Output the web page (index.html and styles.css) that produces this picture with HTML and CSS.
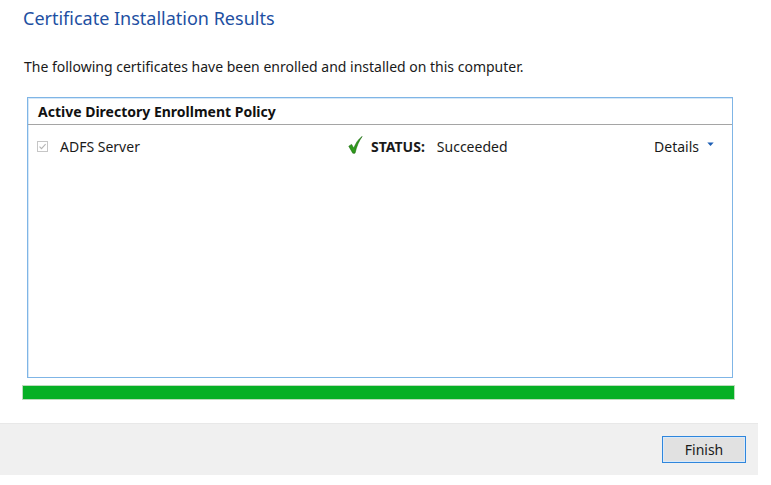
FILE: index.html
```html
<!DOCTYPE html>
<html>
<head>
<meta charset="utf-8">
<link rel="stylesheet" href="styles.css">
</head>
<body>
<div class="window">
  <div class="content">
    <h1 class="title">Certificate Installation Results</h1>
    <p class="intro">The following certificates have been enrolled and installed on this computer.</p>
    <div class="policy">
      <div class="policy-head">Active Directory Enrollment Policy</div>
      <div class="row">
        <div class="name">
          <span class="check">
            <svg width="11" height="11" viewBox="0 0 11 11"><rect x="0.5" y="0.5" width="10" height="10" fill="#fff" stroke="#c6c6c6"/><path d="M2.5 5.6 L4.5 7.6 L8.6 3.2" fill="none" stroke="#b5b5b5" stroke-width="1.1"/></svg>
          </span>
          <span>ADFS Server</span>
        </div>
        <div class="status">
          <svg class="tick" width="15" height="18" viewBox="0 0 15 18"><path d="M0.8 10.2 L3.6 8.4 L5.8 12.2 C7.6 7.5 10 3.4 14.2 0.4 C11 4.6 8.6 10.2 7 17.2 L4.8 17.2 Z" fill="#2e9a1b" stroke="#1c6a10" stroke-width="0.6" stroke-linejoin="round"/></svg>
          <span class="label">STATUS:</span>
          <span class="value">Succeeded</span>
        </div>
        <div class="details">
          <span>Details</span>
          <svg width="7" height="5" viewBox="0 0 7 5"><path d="M0.3 0.6 L6.7 0.6 L3.5 4 Z" fill="#1d5fb5"/></svg>
        </div>
      </div>
    </div>
    <div class="progress"><div class="fill"></div></div>
  </div>
  <div class="footer">
    <button class="finish">Finish</button>
  </div>
</div>
</body>
</html>
```
FILE: styles.css
```css
html, body {
  margin: 0;
  padding: 0;
  background: #ffffff;
}
body {
  font-family: "Noto Sans", "Open Sans", sans-serif;
  color: #1a1a1a;
}
.window {
  width: 758px;
}
.content {
  padding: 5px 0 0 0;
  height: 418px;
  box-sizing: border-box;
}
.title {
  margin: 0 0 0 23px;
  font-size: 18px;
  font-weight: 400;
  color: #1e50a2;
  line-height: 26px;
}
.intro {
  margin: 26px 0 0 24px;
  font-size: 14px;
  line-height: 20px;
  color: #1a1a1a;
}
.policy {
  margin: 20px 0 0 27px;
  width: 706px;
  height: 281px;
  box-sizing: border-box;
  border: 1px solid #7fb5e6;
  box-shadow: inset 1px 1px 0 #d6e8f8;
}
.policy-head {
  height: 27px;
  box-sizing: border-box;
  border-bottom: 1px solid #a5a5a5;
  padding: 4px 0 0 10px;
  font-weight: 700;
  font-size: 14px;
  line-height: 20px;
  color: #111;
}
.row {
  display: flex;
  align-items: center;
  height: 42px;
  padding: 0 18px 0 9px;
  font-size: 14px;
}
.name {
  width: 311px;
  display: flex;
  align-items: center;
  gap: 12px;
}
.check {
  display: flex;
}
.status {
  display: flex;
  align-items: center;
}
.tick {
  margin-right: 8px;
  margin-top: -2px;
}
.label {
  font-weight: 700;
  margin-right: 12px;
}
.details {
  margin-left: auto;
  display: flex;
  align-items: center;
  gap: 8px;
}
.details svg {
  margin-top: -4px;
}
.progress {
  margin: 7px 0 0 22px;
  width: 713px;
  height: 15px;
  box-sizing: border-box;
  border: 1px solid #bcdcbc;
  background: #e6e6e6;
}
.fill {
  width: 100%;
  height: 100%;
  background: #06b025;
}
.footer {
  height: 52px;
  margin-top: 5px;
  background: #f0f0f0;
  border-top: 1px solid #e8e8e8;
  box-sizing: border-box;
  display: flex;
  justify-content: flex-end;
  align-items: flex-start;
  padding: 12px 12px 0 0;
}
.finish {
  width: 84px;
  height: 27px;
  box-sizing: border-box;
  border: 1px solid #2f86dc;
  box-shadow: inset 0 0 0 1px #d9eafb;
  background: #e1e1e1;
  font-family: "Noto Sans", "Open Sans", sans-serif;
  font-size: 14px;
  color: #1a1a1a;
  padding: 0;
  line-height: 22px;
}
```
